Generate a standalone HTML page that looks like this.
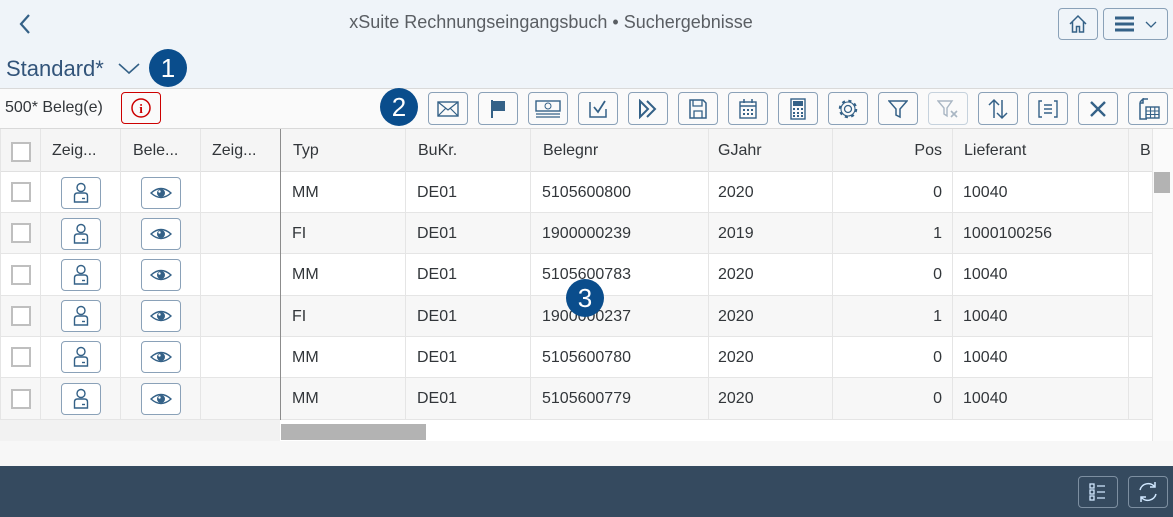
<!DOCTYPE html>
<html><head><meta charset="utf-8"><style>
*{box-sizing:border-box;margin:0;padding:0}
body{width:1173px;height:517px;overflow:hidden;background:#f7f7f7;font-family:"Liberation Sans",Arial,sans-serif;color:#32363a;position:relative}
.a{position:absolute}
.hdr{left:0;top:0;width:1173px;height:88px;background:#eff4f9}
.tb{left:0;top:88px;width:1173px;height:41px;background:#fafafa;border-top:1px solid #d9d9d9;border-bottom:1px solid #d9d9d9}
.btn{position:absolute;width:40px;height:33px;border:1px solid #8aa1b8;border-radius:4px;background:#fafafa;display:flex;align-items:center;justify-content:center}
.badge{position:absolute;width:38px;height:38px;border-radius:50%;background:#0a4d8c;color:#fff;font-size:26px;display:flex;align-items:center;justify-content:center}
.cell{position:absolute;font-size:16px;display:flex;align-items:center;white-space:nowrap}
.row{position:absolute;left:0;width:1152px;height:41px;border-bottom:1px solid #e5e5e5}
.vl{position:absolute;top:129px;width:1px;height:291px;background:#e5e5e5}
.cb{position:absolute;left:11px;width:20px;height:20px;border:2px solid #bfbfbf;background:#fff}
.ib{position:absolute;width:40px;height:32px;border:1px solid #8aa1b8;border-radius:4px;background:#fff;display:flex;align-items:center;justify-content:center}
</style></head><body>
<div class="a hdr"></div>
<svg class="a" style="left:18px;top:13px" width="14" height="22"><path d="M11 2 L3 11 L11 20" stroke="#346187" stroke-width="2.2" fill="none"/></svg>
<div class="a" style="left:0;width:1102px;top:12px;text-align:center;font-size:18px;color:#5a5e63">xSuite Rechnungseingangsbuch • Suchergebnisse</div>
<div class="btn" style="left:1058px;top:8px;width:40px;height:32px;background:#eff4f9"><svg width="20" height="20"><path d="M2 10 L10 2 L18 10 M4.5 8 V18 H8.5 V12.5 H11.5 V18 H15.5 V8" stroke="#346187" stroke-width="1.5" fill="none"/></svg></div>
<div class="btn" style="left:1103px;top:8px;width:65px;height:32px;background:#eff4f9;justify-content:flex-start;padding-left:10px"><svg width="50" height="20"><path d="M1 4H20M1 10H20M1 16H20" stroke="#346187" stroke-width="3"/><path d="M32 8 L37 13 L42 8" stroke="#346187" stroke-width="1.3" fill="none"/></svg></div>
<div class="a" style="left:6px;top:56px;font-size:22px;color:#32547a">Standard*</div>
<svg class="a" style="left:117px;top:60px" width="24" height="16"><path d="M2 4 L12 13 L22 4" stroke="#346187" stroke-width="1.6" fill="none"/></svg>
<div class="badge" style="left:149px;top:49px">1</div>
<div class="a tb"></div>
<div class="a" style="left:5px;top:99px;font-size:16px">500* Beleg(e)</div>
<div class="btn" style="left:121px;top:92px;width:40px;height:32px;border-color:#c00"><svg width="22" height="22"><circle cx="11" cy="11" r="9" stroke="#c00" stroke-width="1.5" fill="none"/><text x="11" y="16" text-anchor="middle" font-family="Liberation Serif" font-weight="bold" font-size="13" fill="#c00">i</text></svg></div>
<div class="badge" style="left:380px;top:88px">2</div>
<div class="btn" style="left:428px;top:92px"><svg width="22" height="16"><rect x="1" y="1" width="20" height="14" stroke="#346187" stroke-width="1.4" fill="none"/><path d="M1 1 L11 9 L21 1 M1 15 L9 7 M21 15 L13 7" stroke="#346187" stroke-width="1.2" fill="none"/></svg></div>
<div class="btn" style="left:478px;top:92px"><svg width="20" height="20"><path d="M4 1V19" stroke="#346187" stroke-width="2"/><path d="M5 2H17V12H5Z" fill="#346187"/></svg></div>
<div class="btn" style="left:528px;top:92px"><svg width="26" height="20"><rect x="1" y="2" width="24" height="10" stroke="#346187" stroke-width="1.4" fill="none"/><circle cx="13" cy="7" r="3" stroke="#346187" fill="none"/><path d="M1 15H25M1 18H25" stroke="#346187" stroke-width="1.3"/></svg></div>
<div class="btn" style="left:578px;top:92px"><svg width="20" height="20"><path d="M2 3V18H18V10" stroke="#346187" stroke-width="1.5" fill="none"/><path d="M6 8L10 13L17 2" stroke="#346187" stroke-width="1.8" fill="none"/></svg></div>
<div class="btn" style="left:628px;top:92px"><svg width="22" height="20"><path d="M3 2L11 10L3 18ZM10 2L18 10L10 18" stroke="#346187" stroke-width="2" fill="none"/></svg></div>
<div class="btn" style="left:678px;top:92px"><svg width="18" height="20"><path d="M1 1H14L17 4V19H1Z" stroke="#346187" stroke-width="1.5" fill="none"/><path d="M4 1V7H13V1M5 19V12H13V19" stroke="#346187" stroke-width="1.3" fill="none"/></svg></div>
<div class="btn" style="left:728px;top:92px"><svg width="20" height="22"><rect x="2" y="4" width="16" height="16" stroke="#346187" stroke-width="1.4" fill="none"/><path d="M6 1V5M14 1V5M2 8H18" stroke="#346187" stroke-width="1.5"/><g fill="#346187"><rect x="5" y="11" width="2" height="2"/><rect x="9" y="11" width="2" height="2"/><rect x="13" y="11" width="2" height="2"/><rect x="5" y="15" width="2" height="2"/><rect x="9" y="15" width="2" height="2"/><rect x="13" y="15" width="2" height="2"/></g></svg></div>
<div class="btn" style="left:778px;top:92px"><svg width="16" height="22"><rect x="1" y="1" width="14" height="20" stroke="#346187" stroke-width="1.4" fill="none"/><rect x="3" y="3" width="10" height="5" fill="#346187"/><g fill="#346187"><rect x="3" y="10" width="2" height="2"/><rect x="7" y="10" width="2" height="2"/><rect x="11" y="10" width="2" height="2"/><rect x="3" y="14" width="2" height="2"/><rect x="7" y="14" width="2" height="2"/><rect x="11" y="14" width="2" height="2"/><rect x="3" y="17" width="2" height="2"/><rect x="7" y="17" width="2" height="2"/><rect x="11" y="17" width="2" height="2"/></g></svg></div>
<div class="btn" style="left:828px;top:92px"><svg width="22" height="22"><circle cx="11" cy="11" r="3.5" stroke="#346187" stroke-width="1.3" fill="none"/><circle cx="11" cy="11" r="8" stroke="#346187" stroke-width="2.5" stroke-dasharray="3 3.3" fill="none"/><circle cx="11" cy="11" r="7" stroke="#346187" stroke-width="1.1" fill="none"/></svg></div>
<div class="btn" style="left:878px;top:92px"><svg width="20" height="20"><path d="M1 2H19L12 10V18L8 16V10Z" stroke="#346187" stroke-width="1.5" fill="none"/></svg></div>
<div class="btn" style="left:928px;top:92px;border-color:#c6d2dd"><svg width="22" height="20"><path d="M1 2H15L10 9V17L7 15V9Z" stroke="#a9b6c3" stroke-width="1.4" fill="none"/><path d="M14 12L20 18M20 12L14 18" stroke="#a9b6c3" stroke-width="1.6"/></svg></div>
<div class="btn" style="left:978px;top:92px"><svg width="22" height="22"><path d="M7 20V2M2 7L7 2L12 7M15 2V20M10 15L15 20L20 15" stroke="#346187" stroke-width="1.5" fill="none"/></svg></div>
<div class="btn" style="left:1028px;top:92px"><svg width="22" height="18"><path d="M5 1H2V17H5M17 1H20V17H17M7 5H15M7 9H15M7 13H15" stroke="#346187" stroke-width="1.4" fill="none"/></svg></div>
<div class="btn" style="left:1078px;top:92px"><svg width="18" height="18"><path d="M2 2L16 16M16 2L2 16" stroke="#346187" stroke-width="2.4"/></svg></div>
<div class="btn" style="left:1128px;top:92px"><svg width="24" height="22"><path d="M7 1H12M4 4L7 1V5H4V21H11" stroke="#346187" stroke-width="1.5" fill="none"/><rect x="10" y="9" width="13" height="11" stroke="#346187" stroke-width="1.4" fill="none"/><path d="M10 13H23M10 16.5H23M14.5 9V20M18.8 9V20" stroke="#346187" stroke-width="1.1"/></svg></div>
<div class="a" style="left:0;top:129px;width:1152px;height:43px;background:#f5f5f5;border-bottom:1px solid #e0e0e0"></div>
<div class="a" style="left:1152px;top:129px;width:21px;height:312px;background:#fafafa;border-left:1px solid #e5e5e5"></div>
<div class="a" style="left:1154px;top:172px;width:16px;height:21px;background:#b3b3b3"></div>
<div class="row" style="top:172px;background:#fff"></div>
<div class="row" style="top:213px;background:#f7f7f7"></div>
<div class="row" style="top:254px;background:#fff;height:42px"></div>
<div class="row" style="top:296px;background:#f7f7f7"></div>
<div class="row" style="top:337px;background:#fff"></div>
<div class="row" style="top:378px;background:#f7f7f7;height:42px"></div>
<div class="a" style="left:0;top:420px;width:1152px;height:21px;background:#fff"></div>
<div class="a" style="left:0;top:420px;width:280px;height:21px;background:#f2f2f2"></div>
<div class="a" style="left:281px;top:424px;width:145px;height:16px;background:#b3b3b3"></div>
<div class="vl" style="left:0"></div><div class="vl" style="left:40px"></div><div class="vl" style="left:120px"></div><div class="vl" style="left:200px"></div>
<div class="vl" style="left:280px;background:#8c8c8c"></div><div class="vl" style="left:405px"></div><div class="vl" style="left:530px"></div><div class="vl" style="left:708px"></div><div class="vl" style="left:832px"></div><div class="vl" style="left:952px"></div><div class="vl" style="left:1128px"></div>
<div class="cb" style="top:142px"></div>
<div class="cell" style="left:52px;top:129px;height:43px">Zeig...</div>
<div class="cell" style="left:133px;top:129px;height:43px">Bele...</div>
<div class="cell" style="left:212px;top:129px;height:43px">Zeig...</div>
<div class="cell" style="left:293px;top:129px;height:43px">Typ</div>
<div class="cell" style="left:418px;top:129px;height:43px">BuKr.</div>
<div class="cell" style="left:543px;top:129px;height:43px">Belegnr</div>
<div class="cell" style="left:718px;top:129px;height:43px">GJahr</div>
<div class="cell" style="left:832px;width:110px;justify-content:flex-end;top:129px;height:43px">Pos</div>
<div class="cell" style="left:964px;top:129px;height:43px">Lieferant</div>
<div class="cell" style="left:1140px;top:129px;height:43px">B</div>
<svg width="0" height="0" style="position:absolute"><defs>
<g id="p"><circle cx="10" cy="5.5" r="4" stroke="#346187" stroke-width="1.4" fill="none"/><path d="M3.5 20V14Q3.5 11 6.5 11H13.5Q16.5 11 16.5 14V20Z" stroke="#346187" stroke-width="1.4" fill="none"/><path d="M11 16.5H14" stroke="#346187" stroke-width="1.4"/></g>
<g id="e"><path d="M1 7Q11 -2 21 7Q11 16 1 7Z" stroke="#346187" stroke-width="1.4" fill="none"/><circle cx="11" cy="7" r="4" fill="#346187"/><circle cx="9.5" cy="5.5" r="1.2" fill="#fff"/></g>
</defs></svg>
<div class="cb" style="top:182px"></div><div class="ib" style="left:61px;top:177px"><svg width="20" height="22"><use href="#p"/></svg></div><div class="ib" style="left:141px;top:177px"><svg width="22" height="14"><use href="#e"/></svg></div>
<div class="cell" style="left:292px;top:172px;height:41px">MM</div><div class="cell" style="left:417px;top:172px;height:41px">DE01</div><div class="cell" style="left:542px;top:172px;height:41px">5105600800</div><div class="cell" style="left:718px;top:172px;height:41px">2020</div><div class="cell" style="left:832px;width:110px;justify-content:flex-end;top:172px;height:41px">0</div><div class="cell" style="left:963px;top:172px;height:41px">10040</div>
<div class="cb" style="top:223px"></div><div class="ib" style="left:61px;top:218px"><svg width="20" height="22"><use href="#p"/></svg></div><div class="ib" style="left:141px;top:218px"><svg width="22" height="14"><use href="#e"/></svg></div>
<div class="cell" style="left:292px;top:213px;height:41px">FI</div><div class="cell" style="left:417px;top:213px;height:41px">DE01</div><div class="cell" style="left:542px;top:213px;height:41px">1900000239</div><div class="cell" style="left:718px;top:213px;height:41px">2019</div><div class="cell" style="left:832px;width:110px;justify-content:flex-end;top:213px;height:41px">1</div><div class="cell" style="left:963px;top:213px;height:41px">1000100256</div>
<div class="cb" style="top:265px"></div><div class="ib" style="left:61px;top:259px"><svg width="20" height="22"><use href="#p"/></svg></div><div class="ib" style="left:141px;top:259px"><svg width="22" height="14"><use href="#e"/></svg></div>
<div class="cell" style="left:292px;top:254px;height:42px">MM</div><div class="cell" style="left:417px;top:254px;height:42px">DE01</div><div class="cell" style="left:542px;top:254px;height:42px">5105600783</div><div class="cell" style="left:718px;top:254px;height:42px">2020</div><div class="cell" style="left:832px;width:110px;justify-content:flex-end;top:254px;height:42px">0</div><div class="cell" style="left:963px;top:254px;height:42px">10040</div>
<div class="cb" style="top:306px"></div><div class="ib" style="left:61px;top:300px"><svg width="20" height="22"><use href="#p"/></svg></div><div class="ib" style="left:141px;top:300px"><svg width="22" height="14"><use href="#e"/></svg></div>
<div class="cell" style="left:292px;top:296px;height:41px">FI</div><div class="cell" style="left:417px;top:296px;height:41px">DE01</div><div class="cell" style="left:542px;top:296px;height:41px">1900000237</div><div class="cell" style="left:718px;top:296px;height:41px">2020</div><div class="cell" style="left:832px;width:110px;justify-content:flex-end;top:296px;height:41px">1</div><div class="cell" style="left:963px;top:296px;height:41px">10040</div>
<div class="cb" style="top:347px"></div><div class="ib" style="left:61px;top:341px"><svg width="20" height="22"><use href="#p"/></svg></div><div class="ib" style="left:141px;top:341px"><svg width="22" height="14"><use href="#e"/></svg></div>
<div class="cell" style="left:292px;top:337px;height:41px">MM</div><div class="cell" style="left:417px;top:337px;height:41px">DE01</div><div class="cell" style="left:542px;top:337px;height:41px">5105600780</div><div class="cell" style="left:718px;top:337px;height:41px">2020</div><div class="cell" style="left:832px;width:110px;justify-content:flex-end;top:337px;height:41px">0</div><div class="cell" style="left:963px;top:337px;height:41px">10040</div>
<div class="cb" style="top:389px"></div><div class="ib" style="left:61px;top:383px"><svg width="20" height="22"><use href="#p"/></svg></div><div class="ib" style="left:141px;top:383px"><svg width="22" height="14"><use href="#e"/></svg></div>
<div class="cell" style="left:292px;top:378px;height:42px">MM</div><div class="cell" style="left:417px;top:378px;height:42px">DE01</div><div class="cell" style="left:542px;top:378px;height:42px">5105600779</div><div class="cell" style="left:718px;top:378px;height:42px">2020</div><div class="cell" style="left:832px;width:110px;justify-content:flex-end;top:378px;height:42px">0</div><div class="cell" style="left:963px;top:378px;height:42px">10040</div>
<div class="badge" style="left:566px;top:279px">3</div>
<div class="a" style="left:0;top:466px;width:1173px;height:51px;background:#354a5f"></div>
<div class="btn" style="left:1078px;top:476px;width:40px;height:32px;background:transparent;border-color:#7d8fa1"><svg width="20" height="20"><g stroke="#d1e8ff" stroke-width="1.3" fill="none"><rect x="2" y="2" width="4" height="4"/><rect x="2" y="8" width="4" height="4"/><rect x="2" y="14" width="4" height="4"/><path d="M9 4H17M9 10H17M9 16H17"/></g></svg></div>
<div class="btn" style="left:1128px;top:476px;width:40px;height:32px;background:transparent;border-color:#7d8fa1"><svg width="22" height="22"><g stroke="#d1e8ff" stroke-width="1.5" fill="none"><path d="M3 9A8.5 8.5 0 0 1 18 6M19 13A8.5 8.5 0 0 1 4 16"/><path d="M18 1V6H13M4 21V16H9"/></g></svg></div>
</body></html>
